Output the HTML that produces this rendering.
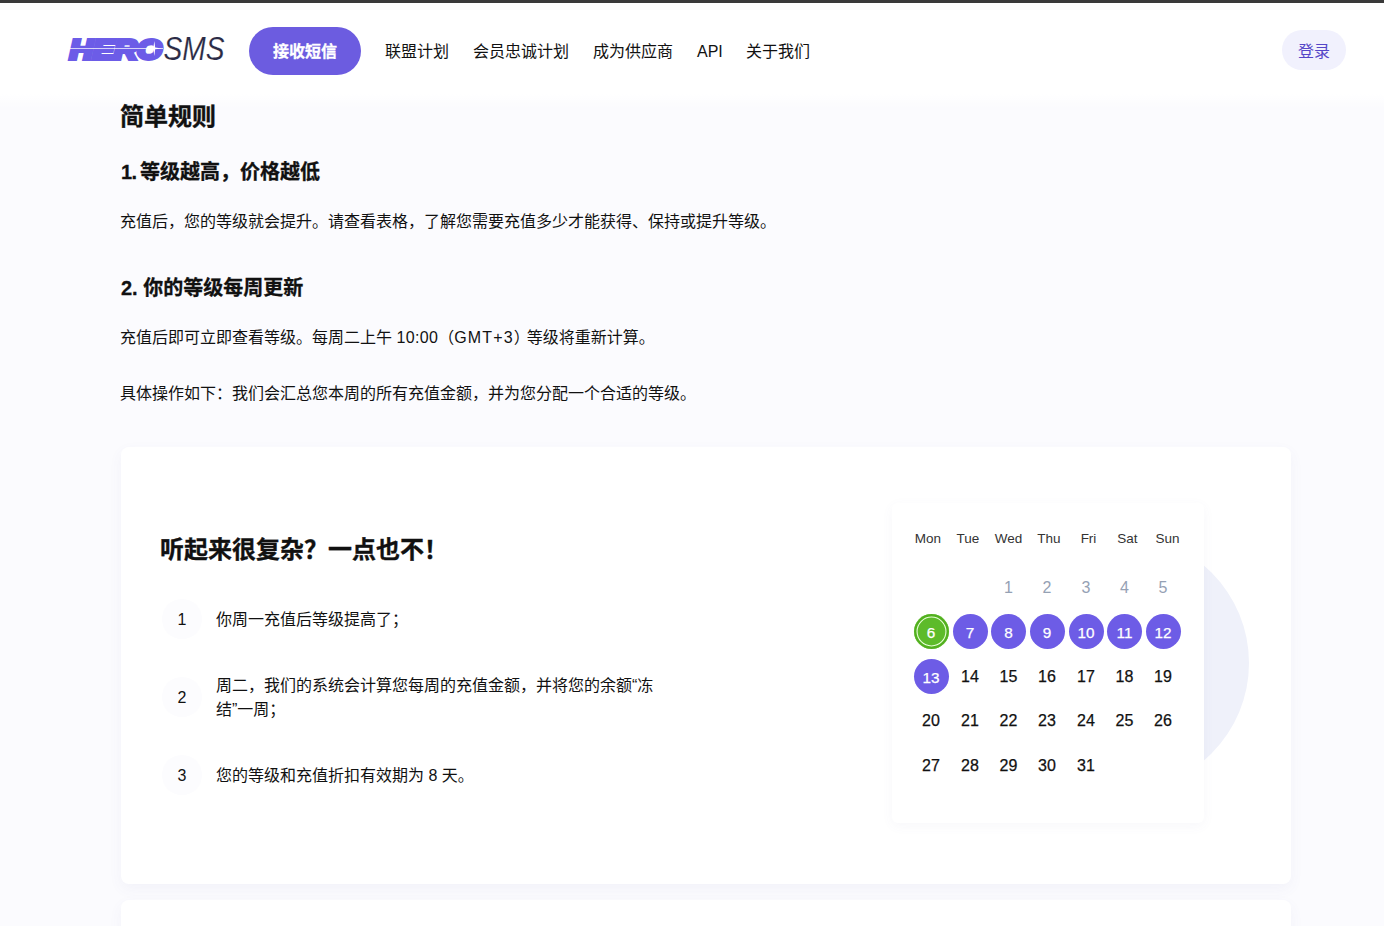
<!DOCTYPE html>
<html lang="zh-CN">
<head>
<meta charset="utf-8">
<title>HeroSMS</title>
<style>
*{box-sizing:border-box;margin:0;padding:0}
html,body{width:1384px;height:926px;overflow:hidden}
body{position:relative;background:#fbfbfe;color:#111;font-family:"Liberation Sans","Noto Sans CJK SC",sans-serif;font-size:16px}
.topbar{position:absolute;left:0;top:0;width:1384px;height:3px;background:#3a3a3a}
.header{position:absolute;left:0;top:3px;width:1384px;height:110px;background:linear-gradient(to bottom,#fff 0,#fff 91px,rgba(255,255,255,0) 106px)}
.logo{position:absolute;left:60px;top:28px;width:175px;height:40px}
.btn{position:absolute;left:249px;top:27px;width:112px;height:48px;border-radius:24px;background:#6c5ce0;color:#fff;font-weight:700;font-size:16px;line-height:50px;text-align:center;-webkit-text-stroke:.3px #fff}
.nav{position:absolute;top:40px;font-size:16px;line-height:24px;color:#111;white-space:nowrap}
.login{position:absolute;left:1282px;top:30px;width:64px;height:40px;border-radius:20px;background:#f1f1fd;color:#5546c8;font-size:16px;line-height:43px;text-align:center}
.t{position:absolute;left:121px;white-space:nowrap;color:#111}
h1.t{font-size:24px;line-height:32px;font-weight:700;-webkit-text-stroke:.35px #111}
h2.t{font-size:20px;line-height:28px;font-weight:700;-webkit-text-stroke:.3px #111}
p.t{font-size:16px;line-height:24px}
.card{position:absolute;left:121px;top:447px;width:1170px;height:437px;background:#fff;border-radius:8px;box-shadow:0 5px 14px rgba(90,100,170,0.055)}
.card2{position:absolute;left:121px;top:900px;width:1170px;height:60px;background:#fff;border-radius:8px;box-shadow:0 5px 14px rgba(90,100,170,0.055)}
.card h3{position:absolute;left:39px;top:87px;font-size:24px;line-height:32px;font-weight:700;white-space:nowrap;-webkit-text-stroke:.35px #111}
.num{position:absolute;left:41px;width:40px;height:40px;border-radius:50%;background:#fcfcfe;text-align:center;line-height:42px;font-size:16px}
.li{position:absolute;left:95px;font-size:16px;line-height:24px;width:450px}

.bigc{position:absolute;left:872px;top:88px;width:256px;height:256px;border-radius:50%;background:#eff1fa}
.cal{position:absolute;left:771px;top:56px;width:312px;height:320px;background:#fff;border-radius:6px;box-shadow:0 3px 12px rgba(90,90,160,0.05)}
.wd{position:absolute;top:25.6px;width:40px;text-align:center;font-size:13.5px;line-height:20px;color:#333}
.d{position:absolute;width:35px;height:35px;border-radius:50%;text-align:center;line-height:35px;font-size:16px;color:#111;-webkit-text-stroke:.25px currentColor}
.d.g{color:#95a1b4;-webkit-text-stroke:0}
.d.p{background:#6d5ce6;color:#fff;font-size:15.3px;line-height:37px}
.d.gr{background:#5dbb2a;color:#fff;font-size:15.3px;line-height:37px;box-shadow:inset 0 0 0 2.5px #52b01f,inset 0 0 0 3.6px #e8ffd8}
</style>
</head>
<body>
<div class="header"></div>
<div class="topbar"></div>

<svg class="logo" viewBox="0 0 175 40">
  <text x="9.8" y="30.5" font-family="Liberation Sans, sans-serif" font-weight="700" font-style="italic" font-size="28" fill="#6c5ce7" stroke="#6c5ce7" stroke-width="4" stroke-linejoin="miter" textLength="92" lengthAdjust="spacingAndGlyphs">HERO</text>
  <rect x="8" y="20" width="95" height="0.8" fill="#fff" opacity=".9"/>
  <polygon points="89,20.4 93.4,19.6 94.3,13 95.2,19.6 102,20.4 95.2,21.2 94.3,28 93.4,21.2" fill="#fff"/>
  <text x="103.5" y="31.8" font-family="Liberation Sans, sans-serif" font-style="italic" font-size="32.5" fill="#2b2b45" stroke="#fff" stroke-width="0.15" textLength="61" lengthAdjust="spacingAndGlyphs">SMS</text>
</svg>

<div class="btn">接收短信</div>
<div class="nav" style="left:385px">联盟计划</div>
<div class="nav" style="left:473px">会员忠诚计划</div>
<div class="nav" style="left:593px">成为供应商</div>
<div class="nav" style="left:697px">API</div>
<div class="nav" style="left:746px">关于我们</div>
<div class="login">登录</div>

<h1 class="t" style="top:101px;left:120px">简单规则</h1>
<h2 class="t" style="top:158px"><span style="letter-spacing:-.6px;word-spacing:-1.5px">1. </span>等级越高，价格越低</h2>
<p class="t" style="top:210px;left:120px">充值后，您的等级就会提升。请查看表格，了解您需要充值多少才能获得、保持或提升等级。</p>
<h2 class="t" style="top:274px">2. 你的等级每周更新</h2>
<p class="t" style="top:326px;left:120px">充值后即可立即查看等级。每周二上午 <span style="letter-spacing:.35px">10:00</span>（<span style="letter-spacing:1.15px">GMT+3</span><span style="margin-right:-3.2px">）</span>等级将重新计算。</p>
<p class="t" style="top:382px;left:120px">具体操作如下：我们会汇总您本周的所有充值金额，并为您分配一个合适的等级。</p>

<div class="card">
  <h3>听起来很复杂？一点也不！</h3>
  <div class="num" style="top:152px">1</div>
  <div class="li" style="top:161px">你周一充值后等级提高了；</div>
  <div class="num" style="top:230px">2</div>
  <div class="li" style="top:227px">周二，我们的系统会计算您每周的充值金额，并将您的余额“冻结”一周；</div>
  <div class="num" style="top:308px">3</div>
  <div class="li" style="top:317px">您的等级和充值折扣有效期为 8 天。</div>
  <div class="bigc"></div>
  <div class="cal">
  <span class="wd" style="left:16px">Mon</span>
  <span class="wd" style="left:56px">Tue</span>
  <span class="wd" style="left:96.5px">Wed</span>
  <span class="wd" style="left:137px">Thu</span>
  <span class="wd" style="left:176.5px">Fri</span>
  <span class="wd" style="left:215.5px">Sat</span>
  <span class="wd" style="left:255.5px">Sun</span>
  <span class="d g" style="left:99px;top:66.5px">1</span>
  <span class="d g" style="left:137.5px;top:66.5px">2</span>
  <span class="d g" style="left:176.5px;top:66.5px">3</span>
  <span class="d g" style="left:215px;top:66.5px">4</span>
  <span class="d g" style="left:253.5px;top:66.5px">5</span>
  <span class="d gr" style="left:21.5px;top:111px">6</span>
  <span class="d p" style="left:60.5px;top:111px">7</span>
  <span class="d p" style="left:99px;top:111px">8</span>
  <span class="d p" style="left:137.5px;top:111px">9</span>
  <span class="d p" style="left:176.5px;top:111px">10</span>
  <span class="d p" style="left:215px;top:111px">11</span>
  <span class="d p" style="left:253.5px;top:111px">12</span>
  <span class="d p" style="left:21.5px;top:155.5px">13</span>
  <span class="d" style="left:60.5px;top:155.5px">14</span>
  <span class="d" style="left:99px;top:155.5px">15</span>
  <span class="d" style="left:137.5px;top:155.5px">16</span>
  <span class="d" style="left:176.5px;top:155.5px">17</span>
  <span class="d" style="left:215px;top:155.5px">18</span>
  <span class="d" style="left:253.5px;top:155.5px">19</span>
  <span class="d" style="left:21.5px;top:200px">20</span>
  <span class="d" style="left:60.5px;top:200px">21</span>
  <span class="d" style="left:99px;top:200px">22</span>
  <span class="d" style="left:137.5px;top:200px">23</span>
  <span class="d" style="left:176.5px;top:200px">24</span>
  <span class="d" style="left:215px;top:200px">25</span>
  <span class="d" style="left:253.5px;top:200px">26</span>
  <span class="d" style="left:21.5px;top:244.5px">27</span>
  <span class="d" style="left:60.5px;top:244.5px">28</span>
  <span class="d" style="left:99px;top:244.5px">29</span>
  <span class="d" style="left:137.5px;top:244.5px">30</span>
  <span class="d" style="left:176.5px;top:244.5px">31</span>
  </div>
</div>
<div class="card2"></div>
</body>
</html>
